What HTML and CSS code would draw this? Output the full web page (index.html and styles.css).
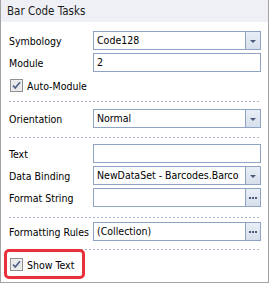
FILE: index.html
```html
<!DOCTYPE html>
<html lang="en">
<head>
  <meta charset="UTF-8">
  <title>Bar Code Tasks</title>
  <link rel="stylesheet" href="styles.css">
</head>
<body>
  <div class="panel">
    <div class="header">Bar Code Tasks</div>

    <div class="body">
      <div class="row">
        <span class="label">Symbology</span>
        <div class="field"><span class="value">Code128</span><span class="btn drop"></span></div>
      </div>
      <div class="row">
        <span class="label">Module</span>
        <div class="field"><span class="value">2</span></div>
      </div>
      <div class="check-row first-check">
        <svg class="check" width="13" height="13" viewBox="0 0 13 13">
          <rect x="0.5" y="0.5" width="12" height="12" fill="#f3f3f3" stroke="#8f8f8f"/>
          <rect x="1.5" y="1.5" width="10" height="10" fill="#e9e9e9"/>
          <path d="M3 6.5 L5.2 9 L10 3.2" fill="none" stroke="#4c5f86" stroke-width="1.6"/>
        </svg>
        <span>Auto-Module</span>
      </div>

      <div class="sep sep-1"></div>

      <div class="row orient">
        <span class="label">Orientation</span>
        <div class="field"><span class="value">Normal</span><span class="btn drop"></span></div>
      </div>

      <div class="sep sep-2"></div>

      <div class="row text-row">
        <span class="label">Text</span>
        <div class="field"><span class="value"></span></div>
      </div>
      <div class="row">
        <span class="label">Data Binding</span>
        <div class="field"><span class="value">NewDataSet - Barcodes.Barco</span><span class="btn drop"></span></div>
      </div>
      <div class="row">
        <span class="label">Format String</span>
        <div class="field"><span class="value"></span><span class="btn dots"></span></div>
      </div>

      <div class="sep sep-3"></div>

      <div class="row rules">
        <span class="label">Formatting Rules</span>
        <div class="field"><span class="value">(Collection)</span><span class="btn dots"></span></div>
      </div>

      <div class="sep sep-4"></div>

      <div class="highlight">
        <div class="check-row">
          <svg class="check" width="13" height="13" viewBox="0 0 13 13">
            <rect x="0.5" y="0.5" width="12" height="12" fill="#f3f3f3" stroke="#8f8f8f"/>
            <rect x="1.5" y="1.5" width="10" height="10" fill="#e9e9e9"/>
            <path d="M3 6.5 L5.2 9 L10 3.2" fill="none" stroke="#4c5f86" stroke-width="1.6"/>
          </svg>
          <span>Show Text</span>
        </div>
      </div>
    </div>
  </div>
</body>
</html>
```

FILE: styles.css
```css
/* Reset y tipografía */
* { box-sizing: border-box; margin: 0; padding: 0; }
body { background: #fff; font-family: "DejaVu Sans Condensed", "DejaVu Sans", sans-serif; font-size: 10.5px; color: #000; }

/* Panel */
.panel { width: 269px; height: 283px; border: 1px solid #a3a3a3; border-top: none; }
.header { height: 22px; background: #eef0f5; padding: 4px 0 0 6px; font-size: 11.5px; color: #1b1b1b; }
.body { padding: 9px 7px 0 8px; }

/* Filas de propiedades */
.row { display: grid; grid-template-columns: 84px 1fr; height: 19px; margin-top: 3px; align-items: center; }
.body > .row:first-child { margin-top: 0; }
.label { white-space: nowrap; }
.field { display: flex; height: 19px; border: 1px solid #8fa3c3; background: #fff; overflow: hidden; }
.value { flex: 1; padding: 2px 0 0 3px; white-space: nowrap; overflow: hidden; }
.btn { width: 15px; height: 17px; border-left: 1px solid #8fa3c3; background: linear-gradient(#e9eef6, #d6dfec); display: flex; align-items: center; justify-content: center; }
.drop::before { content: ""; border-left: 3px solid transparent; border-right: 3px solid transparent; border-top: 3px solid #4a5a7a; margin-top: 1px; }
.dots::before { content: ""; width: 2px; height: 2px; background: #4a5a7a; box-shadow: 3px 0 #4a5a7a, -3px 0 #4a5a7a; margin-top: 1px; }

/* Casillas */
.check-row { display: flex; align-items: center; gap: 4px; height: 13px; padding-left: 1px; }
.first-check { margin-top: 7px; }
.check { display: block; flex: none; }

/* Separadores punteados */
.sep { height: 1px; background: repeating-linear-gradient(90deg, #a8b5cc 0 2px, transparent 2px 4px); }
.sep-1 { margin-top: 9px; }
.sep-2 { margin-top: 9px; }
.sep-3 { margin-top: 10px; }
.sep-4 { margin-top: 8px; }
.row.orient { margin-top: 7px; }
.row.text-row { margin-top: 6px; }
.row.rules { margin-top: 4px; }

/* Marco rojo de resaltado */
.highlight { width: 81px; height: 30px; margin: 0 0 0 -5px; border: 3px solid #e8323b; border-radius: 5px; padding: 6px 0 0 2px; position: relative; top: -1px; }
```
